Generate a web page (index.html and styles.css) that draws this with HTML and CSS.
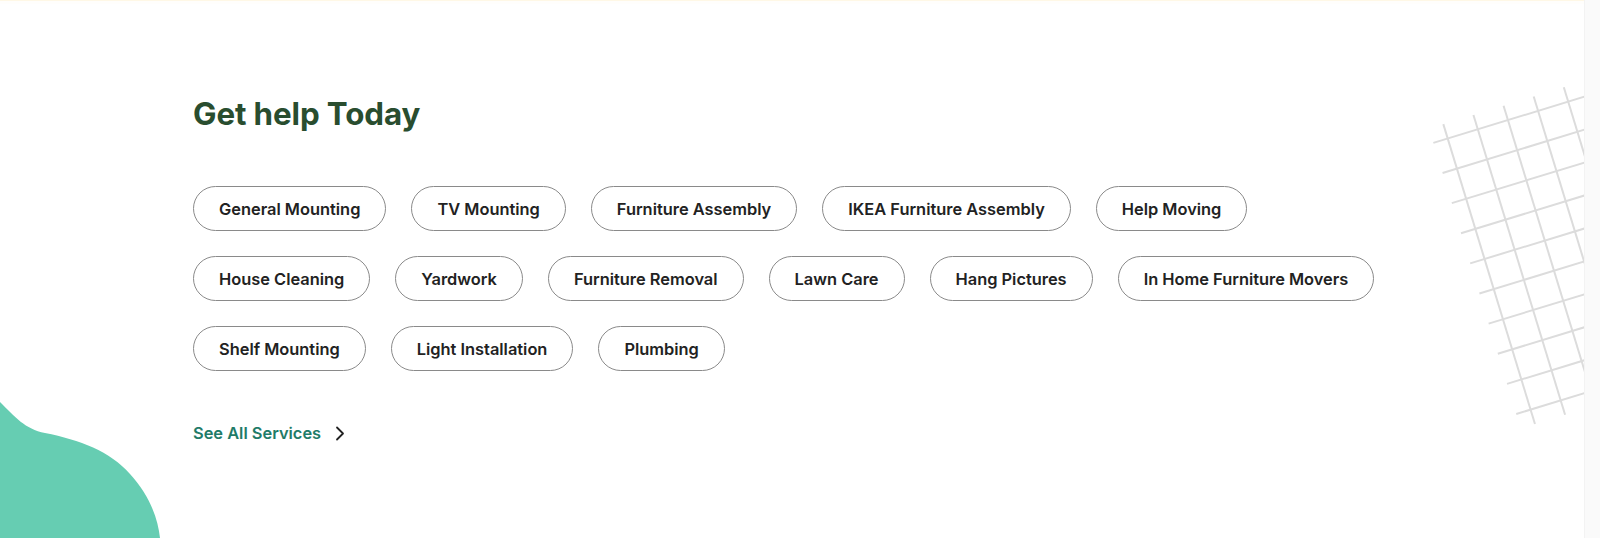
FILE: index.html
```html
<!DOCTYPE html>
<html lang="en">
<head>
<meta charset="utf-8">
<title>Get help Today</title>
<link rel="stylesheet" href="styles.css">
</head>
<body>
<div class="page">
  <main class="main">
    <section class="help">
      <h2 class="help__title">Get help Today</h2>
      <div class="chips">
        <ul class="chip-row">
          <li class="chip">General Mounting</li>
          <li class="chip">TV Mounting</li>
          <li class="chip">Furniture Assembly</li>
          <li class="chip">IKEA Furniture Assembly</li>
          <li class="chip">Help Moving</li>
        </ul>
        <ul class="chip-row">
          <li class="chip">House Cleaning</li>
          <li class="chip">Yardwork</li>
          <li class="chip">Furniture Removal</li>
          <li class="chip">Lawn Care</li>
          <li class="chip">Hang Pictures</li>
          <li class="chip">In Home Furniture Movers</li>
        </ul>
        <ul class="chip-row">
          <li class="chip">Shelf Mounting</li>
          <li class="chip">Light Installation</li>
          <li class="chip">Plumbing</li>
        </ul>
      </div>
      <a class="see-all" href="#">See All Services
        <svg class="see-all__icon" width="10" height="15" viewBox="0 0 10 15" aria-hidden="true"><path d="M2 1.5 L8 7.5 L2 13.5" fill="none" stroke="#222" stroke-width="1.8" stroke-linecap="round" stroke-linejoin="round"/></svg>
      </a>
    </section>

    <svg class="grid-deco" width="200" height="380" viewBox="0 0 200 380" aria-hidden="true">
      <g transform="translate(47.7 78.5) rotate(-17)" stroke="#dcdcdc" stroke-width="2" fill="none">
        <line x1="0" y1="-15" x2="0" y2="298.5"/>
        <line x1="31.5" y1="-15" x2="31.5" y2="298.5"/>
        <line x1="63" y1="-15" x2="63" y2="298.5"/>
        <line x1="94.5" y1="-15" x2="94.5" y2="298.5"/>
        <line x1="126" y1="-15" x2="126" y2="298.5"/>
        <line x1="157.5" y1="-15" x2="157.5" y2="298.5"/>
        <line x1="189" y1="-15" x2="189" y2="298.5"/>
        <line x1="-15" y1="0" x2="204" y2="0"/>
        <line x1="-15" y1="31.5" x2="204" y2="31.5"/>
        <line x1="-15" y1="63" x2="204" y2="63"/>
        <line x1="-15" y1="94.5" x2="204" y2="94.5"/>
        <line x1="-15" y1="126" x2="204" y2="126"/>
        <line x1="-15" y1="157.5" x2="204" y2="157.5"/>
        <line x1="-15" y1="189" x2="204" y2="189"/>
        <line x1="-15" y1="220.5" x2="204" y2="220.5"/>
        <line x1="-15" y1="252" x2="204" y2="252"/>
        <line x1="-15" y1="283.5" x2="204" y2="283.5"/>
      </g>
    </svg>

    <svg class="blob" width="162" height="136" viewBox="0 0 162 136" aria-hidden="true">
      <path d="M0 0 C15 15 25 27 45 31 C80 38 110 49 130 72 C150 94 158 117 160 136 L0 136 Z" fill="#66cdb2"/>
    </svg>
  </main>
  <div class="scroll-track"></div>
</div>
</body>
</html>
```

FILE: styles.css
```css
html, body {
  margin: 0;
  padding: 0;
  height: 100%;
}

body {
  font-family: Inter, "Noto Sans", "Liberation Sans", sans-serif;
  background: #fff;
  color: #222;
  overflow: hidden;
}

.page {
  display: flex;
  height: 538px;
}

.main {
  flex: 1;
  position: relative;
  overflow: hidden;
  background: linear-gradient(#fff8e6 0, #fff8e6 1px, #fffefc 1px, #fffefc 4px, #fff 4px);
}

.scroll-track {
  width: 15px;
  flex: none;
  background: #fafafa;
  border-left: 1px solid #f3f3f3;
}

.help {
  padding: 95px 0 0 193px;
  position: relative;
  z-index: 1;
}

.help__title {
  margin: 0;
  font-size: 31.3px;
  line-height: 38px;
  font-weight: 700;
  color: #294d2f;
  letter-spacing: -0.1px;
}

.chips {
  margin-top: 53px;
  display: flex;
  flex-direction: column;
  gap: 25px;
}

.chip-row {
  list-style: none;
  margin: 0;
  padding: 0;
  display: flex;
  gap: 25px;
}

.chip {
  box-sizing: border-box;
  height: 45px;
  padding: 0 25px;
  border: 1px solid #8a8a8a;
  border-radius: 23px;
  display: flex;
  align-items: center;
  font-size: 16.4px;
  font-weight: 600;
  color: #222;
  white-space: nowrap;
}

.see-all {
  margin-top: 52px;
  display: inline-flex;
  align-items: center;
  gap: 14px;
  font-size: 16.4px;
  line-height: 20px;
  font-weight: 600;
  color: #1f7b68;
  text-decoration: none;
}

.see-all__icon {
  display: block;
}

.grid-deco {
  position: absolute;
  left: 1400px;
  top: 60px;
}

.blob {
  position: absolute;
  left: 0;
  bottom: 0;
}
```
